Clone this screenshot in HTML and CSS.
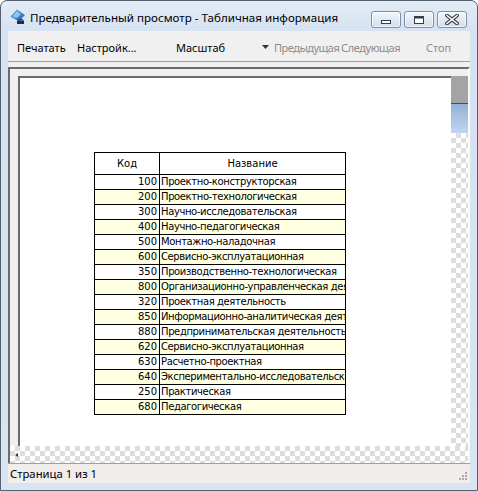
FILE: index.html
```html
<!DOCTYPE html>
<html lang="ru">
<head>
<meta charset="utf-8">
<title>Предварительный просмотр</title>
<link rel="stylesheet" href="styles.css">
</head>
<body>
<div class="window">
  <div class="titlebar">
    <svg class="app-icon" width="16" height="16" viewBox="0 0 16 16">
      <defs>
        <linearGradient id="gem" x1="0" y1="0" x2="0.6" y2="1">
          <stop offset="0" stop-color="#9fd6fb"/>
          <stop offset="0.5" stop-color="#3d95e0"/>
          <stop offset="1" stop-color="#1a5fb4"/>
        </linearGradient>
      </defs>
      <path d="M7 1 L14.5 6 L9 12 L1 7.5 Z" fill="url(#gem)" stroke="#2a6bb8" stroke-width="0.6"/>
      <path d="M2.5 7.3 L7 2.5 L11 5.5 L6.5 9.5 Z" fill="#cdeafd" opacity="0.55"/>
      <path d="M7 11.5 H14 V15 H7 Z" fill="#1d2c58"/>
      <path d="M9 10 H13 V11.5 H9 Z" fill="#33487c"/>
    </svg>
    <span class="title">Предварительный просмотр - Табличная информация</span>
    <div class="caption-buttons">
      <span class="cap-btn">
        <svg width="12" height="10" viewBox="0 0 12 10"><rect x="1.5" y="5.5" width="9" height="3" fill="#fff" stroke="#343d4b"/></svg>
      </span>
      <span class="cap-btn">
        <svg width="12" height="10" viewBox="0 0 12 10"><rect x="1.5" y="1.5" width="9" height="7" fill="#fff" stroke="#343d4b"/><rect x="2" y="2" width="8" height="1.5" fill="#343d4b"/><rect x="3.5" y="4.5" width="5" height="2" fill="#fff"/></svg>
      </span>
      <span class="cap-btn">
        <svg width="14" height="11" viewBox="0 0 14 11"><path d="M2 1.5 L12 9.5 M12 1.5 L2 9.5" stroke="#343d4b" stroke-width="3.6" stroke-linecap="square"/><path d="M2 1.5 L12 9.5 M12 1.5 L2 9.5" stroke="#fff" stroke-width="1.6" stroke-linecap="square"/></svg>
      </span>
    </div>
  </div>

  <div class="client">
    <div class="toolbar">
      <span class="tb-item tb-print">Печатать</span>
      <span class="tb-item tb-setup">Настройк...</span>
      <span class="tb-item tb-zoom">Масштаб</span>
      <span class="tb-item tb-prev disabled"><svg class="tri" width="7" height="4" viewBox="0 0 7 4"><path d="M0 0 H7 L3.5 4 Z" fill="#333"/></svg>Предыдущая</span>
      <span class="tb-item tb-next disabled">Следующая</span>
      <span class="tb-item disabled">Стоп</span>
    </div>

    <div class="preview">
      <div class="viewport">
        <div class="page">
          <div class="report">
            <div class="cell head code">Код</div>
            <div class="cell head">Название</div>

            <div class="cell code">100</div><div class="cell name">Проектно-конструкторская</div>
            <div class="cell code alt">200</div><div class="cell name alt">Проектно-технологическая</div>
            <div class="cell code">300</div><div class="cell name">Научно-исследовательская</div>
            <div class="cell code alt">400</div><div class="cell name alt">Научно-педагогическая</div>
            <div class="cell code">500</div><div class="cell name">Монтажно-наладочная</div>
            <div class="cell code alt">600</div><div class="cell name alt">Сервисно-эксплуатационная</div>
            <div class="cell code">350</div><div class="cell name">Производственно-технологическая</div>
            <div class="cell code alt">800</div><div class="cell name alt">Организационно-управленческая деятельность</div>
            <div class="cell code">320</div><div class="cell name">Проектная деятельность</div>
            <div class="cell code alt">850</div><div class="cell name alt">Информационно-аналитическая деятельность</div>
            <div class="cell code">880</div><div class="cell name">Предпринимательская деятельность</div>
            <div class="cell code alt">620</div><div class="cell name alt">Сервисно-эксплуатационная</div>
            <div class="cell code">630</div><div class="cell name">Расчетно-проектная</div>
            <div class="cell code alt">640</div><div class="cell name alt">Экспериментально-исследовательская</div>
            <div class="cell code">250</div><div class="cell name">Практическая</div>
            <div class="cell code alt">680</div><div class="cell name alt">Педагогическая</div>
          </div>
        </div>
      </div>
      <div class="vscroll">
        <div class="vs-top"></div>
        <div class="vs-thumb"></div>
        <div class="vs-blue"></div>
        <div class="vs-rest checker"></div>
      </div>
      <div class="hscroll checker"><span class="arrow-left"></span></div>
    </div>

    <div class="statusbar">
      <span class="status-text">Страница 1 из 1</span>
      <svg class="grip" width="12" height="12" viewBox="0 0 12 12">
        <g fill="#a9a9a9">
          <rect x="8" y="2" width="2" height="2"/>
          <rect x="5" y="5" width="2" height="2"/><rect x="8" y="5" width="2" height="2"/>
          <rect x="2" y="8" width="2" height="2"/><rect x="5" y="8" width="2" height="2"/><rect x="8" y="8" width="2" height="2"/>
        </g>
      </svg>
    </div>
  </div>
</div>
</body>
</html>
```

FILE: styles.css
```css
* { box-sizing: border-box; }

html, body {
  margin: 0;
  padding: 0;
}

body {
  width: 478px;
  height: 491px;
  overflow: hidden;
  background: #ffffff;
  font-family: "Noto Sans", "DejaVu Sans", sans-serif;
}

.window {
  width: 478px;
  height: 491px;
  border: 1px solid #56606c;
  border-radius: 7px 7px 0 0;
  background: linear-gradient(#e3ecf7, #d6e2f1 30px, #d9e4f2);
  display: flex;
  flex-direction: column;
}

/* ---------- title bar ---------- */
.titlebar {
  height: 30px;
  flex: none;
  display: flex;
  align-items: flex-start;
  padding: 0 10px 0 9px;
}

.app-icon {
  flex: none;
  margin-top: 8px;
  margin-right: 4px;
}

.title {
  font-size: 11.6px;
  line-height: 16px;
  margin-top: 9px;
  color: #000;
  white-space: nowrap;
}

.caption-buttons {
  margin-left: auto;
  margin-top: 10px;
  display: flex;
  gap: 3px;
}

.cap-btn {
  width: 30px;
  height: 17px;
  border: 1px solid #7e8ea4;
  border-radius: 3px;
  background: linear-gradient(#f5f8fc, #e2e9f3 50%, #d3deeb);
  box-shadow: inset 0 0 0 1px rgba(255, 255, 255, 0.7);
  display: flex;
  align-items: center;
  justify-content: center;
}

/* ---------- client area ---------- */
.client {
  flex: 1;
  min-height: 0;
  margin: 0 7px 7px;
  background: #f0f0f0;
  display: flex;
  flex-direction: column;
}

.toolbar {
  height: 31px;
  flex: none;
  border-bottom: 1px solid #a0a0a0;
  margin-bottom: 5px;
  padding: 2px 0 0 9px;
  display: flex;
  align-items: center;
  font-size: 11px;
  color: #000;
}

.tb-item { flex: none; white-space: nowrap; }
.tb-print { width: 60px; }
.tb-setup { width: 99px; }
.tb-zoom { width: 85px; }
.tb-prev { width: 80px; display: flex; align-items: center; letter-spacing: -0.5px; }
.tb-next { width: 85px; letter-spacing: -0.4px; }
.disabled { color: #8d8d8d; }

.tri {
  flex: none;
  margin: 0 5px 1px 1px;
}

/* ---------- preview panel ---------- */
.preview {
  flex: 1;
  min-height: 0;
  display: grid;
  grid-template-columns: 1fr 17px;
  grid-template-rows: 1fr 17px;
  border-left: 2px solid #6b6b6b;
  border-top: 2px solid #6b6b6b;
  border-right: 2px solid #f9f9f9;
}

.viewport {
  min-height: 0;
  background: #f0f0f0;
  padding: 7px 0 0 8px;
  overflow: hidden;
  display: flex;
}

.page {
  flex: 1;
  background: #ffffff;
  border-left: 2px solid #6b6b6b;
  border-top: 2px solid #6b6b6b;
  padding: 74px 0 0 74px;
}

.checker {
  background-color: #ffffff;
  background-image: repeating-conic-gradient(#dddddd 0 25%, #ffffff 0 50%);
  background-size: 10px 10px;
}

.vscroll {
  display: flex;
  flex-direction: column;
  min-height: 0;
}

.vs-top { height: 7px; background: #f0f0f0; }
.vs-thumb { height: 28px; background: #a4a4a4; border-bottom: 1px solid #4d4d4d; }
.vs-blue { height: 29px; background: linear-gradient(#93b1d7, #c0d6ef); }
.vs-rest { flex: 1; }

.hscroll {
  grid-column: 1 / -1;
  display: flex;
  align-items: center;
}

.arrow-left {
  width: 0;
  height: 0;
  border-right: 3px solid #333;
  border-top: 2px solid transparent;
  border-bottom: 2px solid transparent;
  margin-left: 5px;
}

/* ---------- report table ---------- */
.report {
  display: grid;
  grid-template-columns: 65px 185px;
  width: 252px;
  border: 1px solid #000;
  border-bottom: none;
  font-family: "DejaVu Sans", sans-serif;
  font-size: 10px;
  color: #000;
}

.cell {
  height: 15px;
  line-height: 14px;
  border-bottom: 1px solid #000;
  white-space: nowrap;
  overflow: hidden;
  background: #ffffff;
}

.cell.head {
  height: 22px;
  line-height: 21px;
  text-align: center;
  padding: 0;
}

.code {
  border-right: 1px solid #000;
  text-align: right;
  padding-right: 2px;
}

.name {
  padding-left: 1px;
  letter-spacing: -0.38px;
}

.cell.alt { background: #ffffe1; }

/* ---------- status bar ---------- */
.statusbar {
  height: 20px;
  flex: none;
  border-top: 1px solid #a0a0a0;
  background: #f0edeb;
  display: flex;
  align-items: center;
  padding-left: 2px;
  font-size: 11.3px;
  color: #000;
}

.grip {
  margin-left: auto;
  margin-right: 1px;
  margin-top: 4px;
}
```
